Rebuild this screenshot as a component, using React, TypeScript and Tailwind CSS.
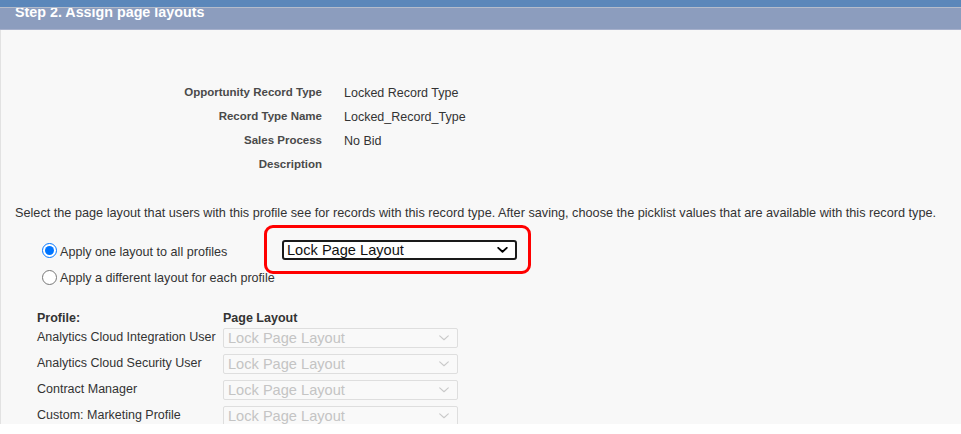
import React from "react";

const profiles = [
  "Analytics Cloud Integration User",
  "Analytics Cloud Security User",
  "Contract Manager",
  "Custom: Marketing Profile",
];

const details: [string, string][] = [
  ["Opportunity Record Type", "Locked Record Type"],
  ["Record Type Name", "Locked_Record_Type"],
  ["Sales Process", "No Bid"],
  ["Description", ""],
];

function Chevron({ className, width = 2.2 }: { className?: string; width?: number }) {
  return (
    <svg viewBox="0 0 12 7" className={className} fill="none">
      <path d="M1 1l5 4.5L11 1" stroke="currentColor" strokeWidth={width} strokeLinecap="round" strokeLinejoin="round" />
    </svg>
  );
}

function DisabledSelect() {
  return (
    <div className="flex h-[20px] w-[235px] items-center justify-between rounded-[2px] border border-[#dedede] bg-[#f9f9f9] pl-[4px] pr-[7px] text-[14.6px] leading-none text-[#c4c4c4]">
      <span>Lock Page Layout</span>
      <Chevron className="h-[6px] w-[12px] text-[#c9c9c9]" width={1.3} />
    </div>
  );
}

export default function App() {
  return (
    <div className="h-[434px] w-[961px] overflow-hidden bg-white font-['Liberation_Sans',Arial,sans-serif]">
      <div className="h-[7px] bg-[#5b87ba]" />
      <div className="h-[1px] bg-[#b4bccb]" />
      <div className="h-[22px] overflow-hidden border-b border-[#a6b0cb] bg-[#8c9dbe] pl-[15px]">
        <div className="-mt-[3px] text-[14.3px] font-bold leading-[14px] text-white">
          Step 2. Assign page layouts
        </div>
      </div>

      <div className="h-[394px] overflow-hidden border-l border-[#e2e2e2] bg-[#f8f8f8]">
        <div className="pt-[51px]">
          {details.map(([label, value]) => (
            <div key={label} className="flex h-[24px] items-center">
              <div className="w-[321px] text-right text-[11.5px] font-bold text-[#4a4a4a]">{label}</div>
              <div className="ml-[22px] text-[12.5px] text-[#333]">{value}</div>
            </div>
          ))}
        </div>

        <p className="mt-[28px] px-[14px] text-[12.7px] leading-[16px] text-[#333]">
          Select the page layout that users with this profile see for records with this record type. After saving, choose the picklist values that are available with this record type.
        </p>

        <div className="mt-[18px] pl-[41px] text-[12.6px] text-[#333]">
          <div className="flex h-[24px] items-center">
            <label className="flex w-[240px] items-center gap-[3px]">
              <input type="radio" name="layout" defaultChecked className="m-0 h-[15px] w-[15px] accent-[#0075ff]" />
              <span className="mt-[2px]">Apply one layout to all profiles</span>
            </label>
            <div className="relative -mt-[2px]">
              <div className="flex h-[20px] w-[235px] items-center justify-between rounded-[3px] border-2 border-[#1a1a1a] bg-white pl-[3px] pr-[7px] text-[14.6px] leading-none text-[#111]">
                <span>Lock Page Layout</span>
                <Chevron className="h-[6px] w-[11px] text-black" />
              </div>
              <div className="pointer-events-none absolute -bottom-[14px] -left-[18px] -right-[14px] -top-[15px] rounded-[9px] border-[3px] border-[#f00]" />
            </div>
          </div>
          <label className="mt-[2px] flex h-[24px] items-center gap-[3px]">
            <input type="radio" name="layout" className="m-0 h-[15px] w-[15px]" />
            <span className="mt-[2px]">Apply a different layout for each profile</span>
          </label>
        </div>

        <div className="mt-[21px] pl-[36px] text-[12.5px] text-[#333]">
          <div className="flex h-[16px] items-center font-bold">
            <div className="w-[186px]">Profile:</div>
            <div>Page Layout</div>
          </div>
          {profiles.map((p, i) => (
            <div key={p} className={`flex items-start ${i === 0 ? "mt-[2px]" : "mt-[6px]"}`}>
              <div className="w-[186px] leading-[18px]">{p}</div>
              <DisabledSelect />
            </div>
          ))}
        </div>
      </div>
    </div>
  );
}
